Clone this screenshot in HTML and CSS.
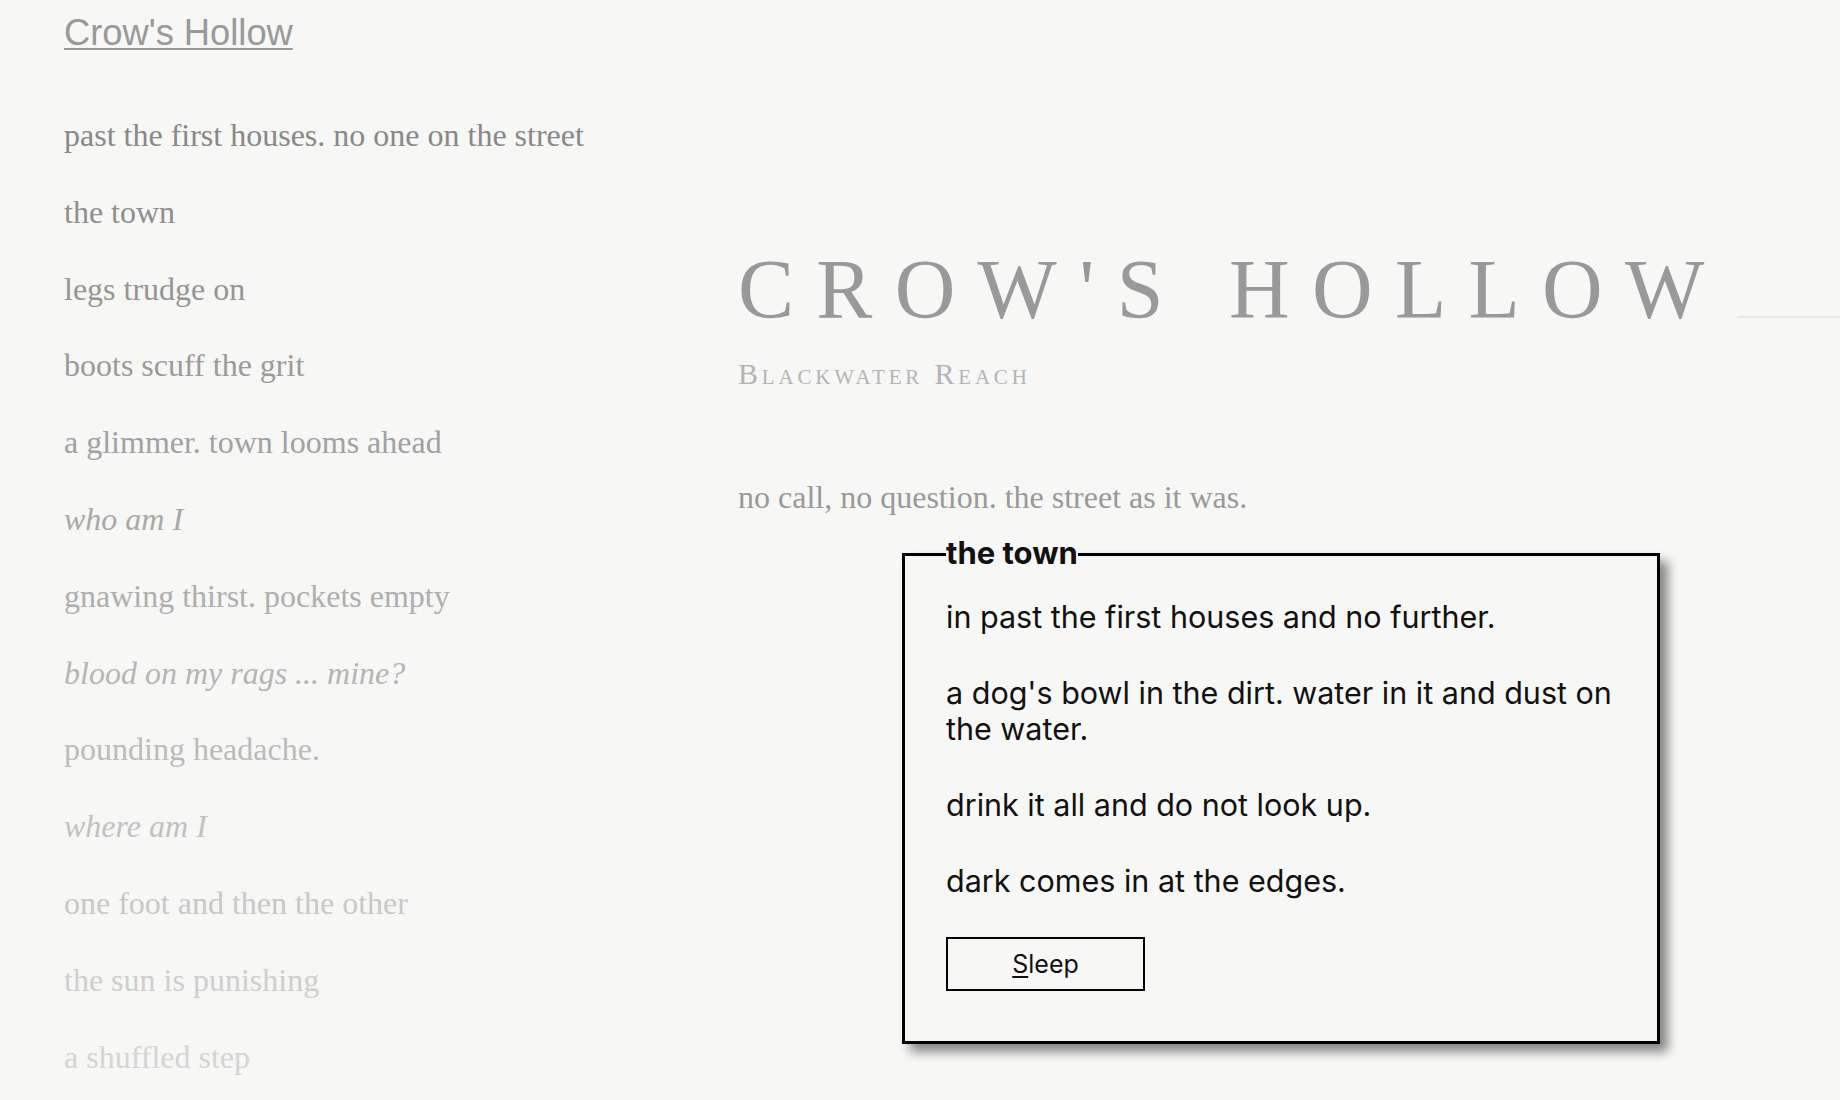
FILE: index.html
```html
<!DOCTYPE html>
<html lang="en">
<head>
    <meta charset="UTF-8">
    <meta name="viewport" content="width=device-width, initial-scale=1.0">
    <title>Crow's Hollow</title>
    <link rel="stylesheet" href="styles.css">
</head>
<body>
    <div class="page">
        <aside class="log">
            <a class="home" href="#">Crow's Hollow</a>

            <ol class="trail">
                <li style="opacity: 1">past the first houses. no one on the street</li>
                <li style="opacity: 0.942">the town</li>
                <li style="opacity: 0.884">legs trudge on</li>
                <li style="opacity: 0.826">boots scuff the grit</li>
                <li style="opacity: 0.768">a glimmer. town looms ahead</li>
                <li class="thought" style="opacity: 0.71">who am I</li>
                <li style="opacity: 0.652">gnawing thirst. pockets empty</li>
                <li class="thought" style="opacity: 0.594">blood on my rags ... mine?</li>
                <li style="opacity: 0.536">pounding headache.</li>
                <li class="thought" style="opacity: 0.478">where am I</li>
                <li style="opacity: 0.42">one foot and then the other</li>
                <li style="opacity: 0.362">the sun is punishing</li>
                <li style="opacity: 0.304">a shuffled step</li>
            </ol>
        </aside>

        <main class="scene">
            <header class="place">
                <div class="place-row">
                    <h1 class="place-name">Crow's Hollow</h1>
                    <span class="place-rule"></span>
                </div>
                <p class="place-region">Blackwater Reach</p>
            </header>

            <p class="narration">no call, no question. the street as it was.</p>

            <fieldset class="encounter">
                <legend>the town</legend>
                <p>in past the first houses and no further.</p>
                <p>a dog's bowl in the dirt. water in it and dust on the water.</p>
                <p>drink it all and do not look up.</p>
                <p>dark comes in at the edges.</p>
                <button class="choice" accesskey="s"><u>S</u>leep</button>
            </fieldset>
        </main>
    </div>
</body>
</html>
```

FILE: styles.css
```css
html,
body {
    margin: 0;
    padding: 0;
}

body {
    background-color: #f7f7f5;
    color: #888;
    font-family: "Liberation Serif", "Times New Roman", serif;
    font-size: 32px;
    overflow: hidden;
}

.page {
    display: grid;
    grid-template-columns: 610px 1fr;
    column-gap: 64px;
    padding-left: 64px;
    min-height: 100vh;
}

/* left column: the trail so far */
.log {
    padding-top: 12px;
}

.home {
    display: inline-block;
    font-family: "Liberation Sans", Arial, sans-serif;
    font-size: 36.3px;
    line-height: 42px;
    color: #999;
    text-decoration: underline;
    text-decoration-thickness: 2px;
    text-underline-offset: 3px;
}

.trail {
    list-style: none;
    margin: 59px 0 0;
    padding: 0;
}

.trail li {
    margin: 0 0 32px;
    line-height: 44.8px;
    white-space: nowrap;
}

.trail .thought {
    font-style: italic;
}

/* right column: where we are now */
.scene {
    padding-top: 242px;
}

.place-row {
    display: flex;
    align-items: baseline;
    gap: 10px;
}

.place-name {
    margin: 0;
    font-size: 84px;
    font-weight: normal;
    line-height: 96px;
    letter-spacing: 22.3px;
    text-transform: uppercase;
    color: #999;
    white-space: nowrap;
}

.place-rule {
    flex: 1;
    height: 2px;
    background-color: #e6e6e4;
}

.place-region {
    margin: 18px 0 0;
    font-size: 30px;
    line-height: 36px;
    font-variant: small-caps;
    letter-spacing: 3.8px;
    color: #b4b4b4;
}

.narration {
    margin: 83px 0 0;
    line-height: 44.8px;
    color: #999;
}

.encounter {
    box-sizing: border-box;
    width: 758px;
    margin: 15px 0 0 164px;
    padding: 24px 41px 50px;
    border: 3px solid #000;
    background-color: #f7f7f5;
    box-shadow: 8px 8px 10px rgba(0, 0, 0, 0.45);
    font-family: Inter, "Liberation Sans", sans-serif;
    font-size: 30.5px;
    line-height: 36px;
    color: #111;
}

.encounter legend {
    padding: 0 0 4px;
    font-size: 31px;
    font-weight: 700;
    line-height: 36px;
}

.encounter p {
    margin: 0 0 40px;
}

.choice {
    display: block;
    box-sizing: border-box;
    width: 199px;
    height: 54px;
    margin-top: -2px;
    padding: 0;
    border: 2px solid #000;
    background-color: transparent;
    font-family: Inter, "Liberation Sans", sans-serif;
    font-size: 25px;
    color: #111;
    cursor: pointer;
}

.choice u {
    text-underline-offset: 3px;
}
```
